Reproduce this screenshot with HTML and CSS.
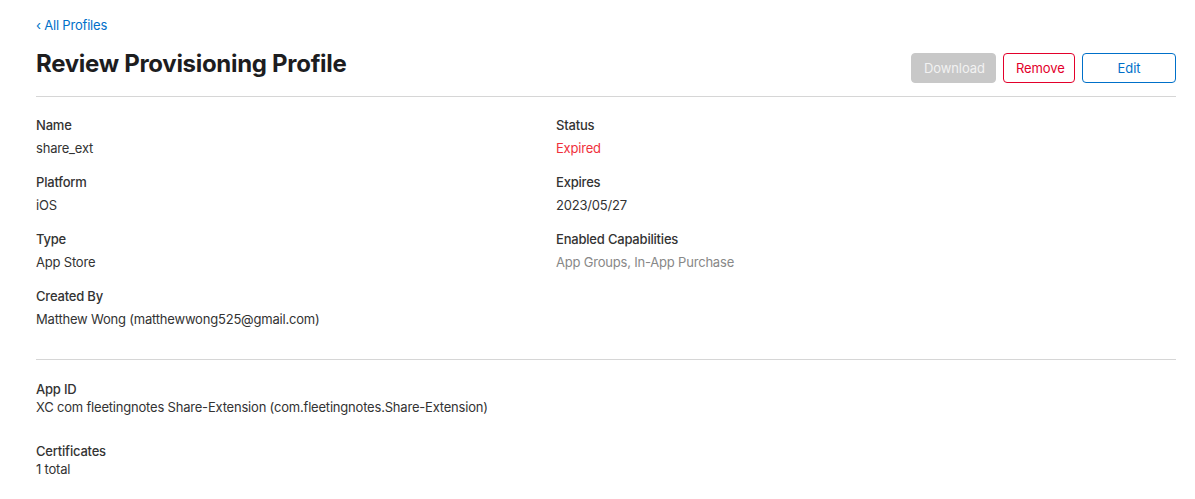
FILE: index.html
```html
<!DOCTYPE html>
<html>
<head>
<meta charset="utf-8">
<link rel="stylesheet" href="styles.css">
</head>
<body>
<div class="page">
  <a class="back" href="#">‹ All Profiles</a>
  <div class="header">
    <h1 class="title">Review Provisioning Profile</h1>
    <div class="actions">
      <button class="btn btn-disabled">Download</button>
      <button class="btn btn-danger">Remove</button>
      <button class="btn btn-primary btn-edit">Edit</button>
    </div>
  </div>
  <div class="details">
    <div class="col">
      <div class="field"><div class="label">Name</div><div class="value">share_ext</div></div>
      <div class="field"><div class="label">Platform</div><div class="value">iOS</div></div>
      <div class="field"><div class="label">Type</div><div class="value">App Store</div></div>
      <div class="field"><div class="label">Created By</div><div class="value">Matthew Wong (matthewwong525@gmail.com)</div></div>
    </div>
    <div class="col">
      <div class="field"><div class="label">Status</div><div class="value expired">Expired</div></div>
      <div class="field"><div class="label">Expires</div><div class="value">2023/05/27</div></div>
      <div class="field"><div class="label">Enabled Capabilities</div><div class="value muted">App Groups, In-App Purchase</div></div>
    </div>
  </div>
  <div class="section">
    <div class="block"><div class="label">App ID</div><div class="value">XC com fleetingnotes Share-Extension (com.fleetingnotes.Share-Extension)</div></div>
    <div class="block"><div class="label">Certificates</div><div class="value">1 total</div></div>
  </div>
</div>
</body>
</html>
```
FILE: styles.css
```css
* { box-sizing: border-box; }
html, body { margin: 0; padding: 0; background: #fff; }
body {
  font-family: Inter, "Noto Sans", "Liberation Sans", sans-serif;
  font-size: 13px;
  line-height: 18px;
  color: #333;
  letter-spacing: -0.2px;
}
.page {
  padding: 16px 19px 0 36px;
}
.back {
  display: block;
  color: #0070c9;
  text-decoration: none;
}
.header {
  display: flex;
  justify-content: space-between;
  align-items: flex-start;
  margin-top: 14px;
  padding-bottom: 13px;
  border-bottom: 1px solid #d6d6d6;
}
.title {
  margin: 0;
  font-size: 24px;
  line-height: 32px;
  font-weight: 700;
  color: #1d1d1f;
  letter-spacing: -0.3px;
}
.actions {
  display: flex;
  gap: 7px;
  margin-top: 5px;
}
.btn {
  font-family: inherit;
  font-size: 13px;
  letter-spacing: -0.1px;
  height: 30px;
  padding: 0 12px;
  border-radius: 4px;
  background: #fff;
  border: 1px solid;
  cursor: pointer;
}
.btn-disabled {
  background: #c8c8c8;
  border-color: #c8c8c8;
  color: #f2f2f2;
  width: 85px;
}
.btn-danger {
  border-color: #e3002b;
  color: #e3002b;
  width: 72px;
}
.btn-primary {
  border-color: #0070c9;
  color: #0070c9;
}
.btn-edit { width: 94px; }
.details {
  display: grid;
  grid-template-columns: 520px 1fr;
  padding-top: 19px;
  padding-bottom: 31px;
  border-bottom: 1px solid #d6d6d6;
}
.field { margin-bottom: 16px; }
.field:last-child { margin-bottom: 0; }
.label {
  font-weight: 500;
  color: #333;
}
.field .value { margin-top: 5px; }
.value { color: #333; }
.expired { color: #f0303c; }
.muted { color: #888; }
.section { padding-top: 20px; }
.block { margin-bottom: 26px; }
```
